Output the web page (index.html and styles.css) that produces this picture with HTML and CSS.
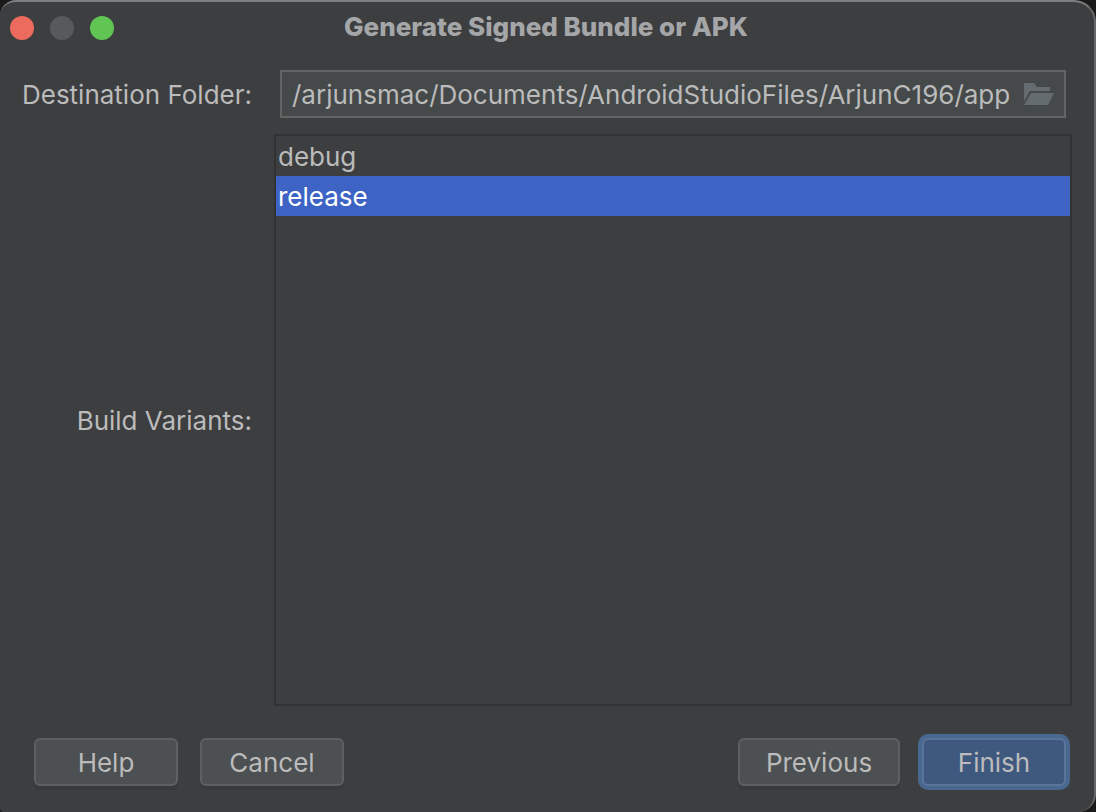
FILE: index.html
```html
<!DOCTYPE html>
<html lang="en">
<head>
<meta charset="utf-8">
<title>Generate Signed Bundle or APK</title>
<link rel="stylesheet" href="styles.css">
</head>
<body>
<main class="window">
  <header class="titlebar">
    <div class="lights">
      <button class="light light-close" type="button" aria-label="Close"></button>
      <button class="light light-min" type="button" aria-label="Minimize" disabled></button>
      <button class="light light-zoom" type="button" aria-label="Zoom"></button>
    </div>
    <h1 class="title">Generate Signed Bundle or APK</h1>
  </header>
  <form class="form">
    <label class="label" for="folder">Destination Folder:</label>
    <div class="field">
      <input class="path" id="folder" type="text" value="/arjunsmac/Documents/AndroidStudioFiles/ArjunC196/app">
      <button class="browse" type="button" aria-label="Browse">
        <svg class="folder" viewBox="0 0 30 22" aria-hidden="true">
          <path d="M0 0H10L13 4H26V8H6L0 18Z"/>
          <path d="M7 10H30L24 22H0Z"/>
        </svg>
      </button>
    </div>
    <label class="label" for="variants">Build Variants:</label>
    <select class="variants" id="variants" size="2">
      <option class="variant">debug</option>
      <option class="variant" selected>release</option>
    </select>
  </form>
  <footer class="actions">
    <button class="button" type="button">Help</button>
    <button class="button" type="button">Cancel</button>
    <span class="spacer"></span>
    <button class="button button-wide" type="button">Previous</button>
    <button class="button button-default" type="submit">Finish</button>
  </footer>
</main>
</body>
</html>
```
FILE: styles.css
```css
* { box-sizing: border-box; }

body {
  margin: 0;
  background: #1a1a1b;
  color: #bbbbbb;
  font: 26px/40px Inter, "Liberation Sans", sans-serif;
  overflow: hidden;
}

button, input, select { font: inherit; color: inherit; }

.window {
  display: flex;
  flex-direction: column;
  height: 100vh;
  background: #3d3e40;
  border: 2px solid #666769;
  border-top-color: #7d7e80;
  border-bottom: 0;
  border-left: 0;
  border-radius: 16px 22px 18px 4px;
}

.titlebar {
  display: grid;
  grid-template-columns: 1fr auto 1fr;
  align-items: center;
  height: 52px;
  padding: 0 12px 0 10px;
}

.lights { display: flex; gap: 16px; }

.light {
  width: 24px;
  height: 24px;
  padding: 0;
  border: 0;
  border-radius: 50%;
}
.light-close { background: #ed6a5e; }
.light-min { background: #58595b; }
.light-zoom { background: #61c554; }

.title {
  margin: 0;
  padding-bottom: 2px;
  color: #a5a6a8;
  font-size: 26px;
  font-weight: 800;
}

.form {
  flex: 1;
  min-height: 0;
  display: grid;
  grid-template-columns: 236px 1fr;
  grid-template-rows: 48px 1fr;
  column-gap: 20px;
  row-gap: 16px;
  align-items: center;
  padding: 16px 22px 0 18px;
}

.label {
  justify-self: end;
  padding: 2px 2px 0 0;
  white-space: nowrap;
}

.field {
  display: flex;
  align-items: center;
  gap: 12px;
  height: 48px;
  margin: 0 6px;
  padding: 0 10px;
  background: #45494a;
  border: 2px solid #646464;
}

.path {
  flex: 1;
  min-width: 0;
  height: 40px;
  padding: 2px 0 0;
  background: none;
  border: 0;
  outline: 0;
}

.browse {
  display: flex;
  padding: 0;
  background: none;
  border: 0;
}

.folder {
  width: 30px;
  height: 22px;
  fill: #646c70;
}

.variants {
  width: 100%;
  height: 100%;
  padding: 0;
  overflow: hidden;
  background: #3d3e40;
  border: 2px solid #323232;
  border-radius: 0;
  outline: 0;
}

.variant {
  height: 40px;
  padding: 5px 2px 0;
}
.variant:checked {
  background: #3d64c4;
  color: #ffffff;
}

.actions {
  display: flex;
  gap: 22px;
  padding: 32px 28px 26px 34px;
}

.spacer { flex: 1; }

.button {
  width: 144px;
  height: 48px;
  padding: 2px 0 0;
  background: #4c5052;
  border: 2px solid #5e6060;
  border-radius: 6px;
  box-shadow: 0 4px 0 #38393b;
}
.button-wide { width: 162px; }
.button-default {
  background: #3e587e;
  border-color: #5a7399;
  box-shadow: 0 0 0 4px #48688f;
}
```
